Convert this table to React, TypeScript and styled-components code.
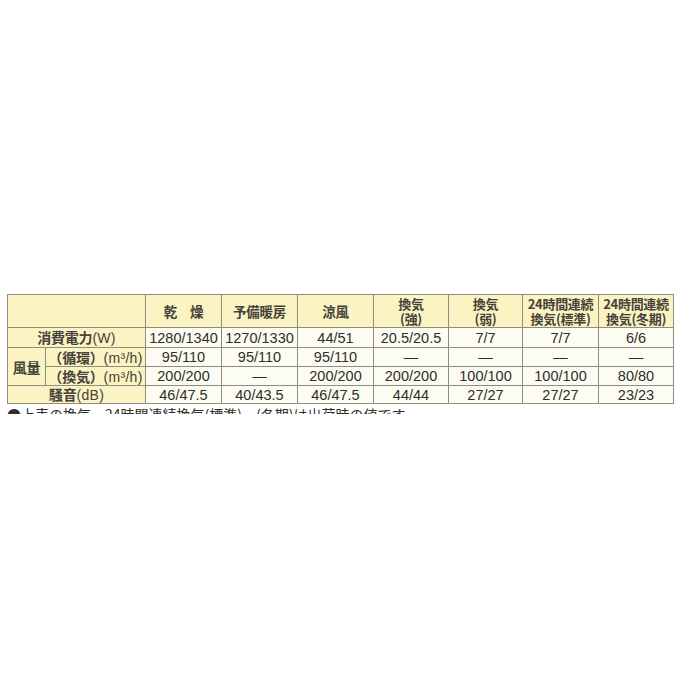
import React from "react";
import styled, { createGlobalStyle } from "styled-components";

const Global = createGlobalStyle`
  html, body { margin: 0; padding: 0; background: #ffffff; }
  body { font-family: "Liberation Sans", "Noto Sans CJK JP", sans-serif; }
`;

const Page = styled.div`
  width: 700px;
  height: 700px;
  padding: 294px 0 0 7px;
  box-sizing: border-box;
  overflow: hidden;
`;

const Table = styled.table`
  border-collapse: collapse;
  table-layout: fixed;
  width: 667px;
  color: #2e2e2a;
  font-size: 14px;
`;

const HeadCell = styled.th<{ $two?: boolean }>`
  background: #fcf3c2;
  border: 1px solid #8f8d80;
  height: 32px;
  padding: 0;
  font-family: "Noto Sans CJK JP", sans-serif;
  font-weight: 700;
  font-size: ${(p) => (p.$two ? "13px" : "13.5px")};
  line-height: ${(p) => (p.$two ? "15px" : "16px")};
  text-align: center;
  vertical-align: middle;
  color: #44423a;
  white-space: nowrap;
  letter-spacing: -0.3px;
`;

const Label = styled.td`
  background: #fcf3c2;
  border: 1px solid #8f8d80;
  padding: 0;
  font-family: "Noto Sans CJK JP", sans-serif;
  font-weight: 700;
  font-size: 14px;
  line-height: 16px;
  text-align: center;
  vertical-align: middle;
  color: #44423a;
  white-space: nowrap;
  letter-spacing: -0.2px;
`;

const Unit = styled.span`
  font-family: "Liberation Sans", sans-serif;
  font-weight: 400;
  letter-spacing: 0.3px;
`;

const Data = styled.td<{ $h: number }>`
  background: #fdfcf2;
  border: 1px solid #8f8d80;
  height: ${(p) => p.$h}px;
  padding: 0;
  text-align: center;
  vertical-align: middle;
  font-family: "Liberation Sans", sans-serif;
  font-size: 14.5px;
  line-height: 16px;
  color: #2e2e2a;
  white-space: nowrap;
`;

const Note = styled.div`
  height: 9px;
  overflow: hidden;
  margin-top: 1px;
  font-family: "Noto Sans CJK JP", sans-serif;
  font-size: 14px;
  line-height: 19px;
  color: #2e2e2a;
  white-space: nowrap;
`;

const cols = [38, 100, 76, 76, 76, 75, 74, 76, 75];

const dash = "—";

export default function App() {
  return (
    <Page>
      <Global />
      <Table>
        <colgroup>
          {cols.map((w, i) => (
            <col key={i} style={{ width: w }} />
          ))}
        </colgroup>
        <thead>
          <tr>
            <HeadCell colSpan={2} />
            <HeadCell>乾&emsp;燥</HeadCell>
            <HeadCell>予備暖房</HeadCell>
            <HeadCell>涼風</HeadCell>
            <HeadCell $two>
              換気
              <br />
              (強)
            </HeadCell>
            <HeadCell $two>
              換気
              <br />
              (弱)
            </HeadCell>
            <HeadCell $two>
              24時間連続
              <br />
              換気(標準)
            </HeadCell>
            <HeadCell $two>
              24時間連続
              <br />
              換気(冬期)
            </HeadCell>
          </tr>
        </thead>
        <tbody>
          <tr>
            <Label colSpan={2}>
              消費電力<Unit>(W)</Unit>
            </Label>
            {["1280/1340", "1270/1330", "44/51", "20.5/20.5", "7/7", "7/7", "6/6"].map((v, i) => (
              <Data key={i} $h={19}>{v}</Data>
            ))}
          </tr>
          <tr>
            <Label rowSpan={2}>風量</Label>
            <Label>
              （循環）<Unit>(m³/h)</Unit>
            </Label>
            {["95/110", "95/110", "95/110", dash, dash, dash, dash].map((v, i) => (
              <Data key={i} $h={18}>{v}</Data>
            ))}
          </tr>
          <tr>
            <Label>
              （換気）<Unit>(m³/h)</Unit>
            </Label>
            {["200/200", dash, "200/200", "200/200", "100/100", "100/100", "80/80"].map((v, i) => (
              <Data key={i} $h={18}>{v}</Data>
            ))}
          </tr>
          <tr>
            <Label colSpan={2}>
              騒音<Unit>(dB)</Unit>
            </Label>
            {["46/47.5", "40/43.5", "46/47.5", "44/44", "27/27", "27/27", "23/23"].map((v, i) => (
              <Data key={i} $h={17}>{v}</Data>
            ))}
          </tr>
        </tbody>
      </Table>
      <Note>●上表の換気、24時間連続換気(標準)・(冬期)は出荷時の値です。</Note>
    </Page>
  );
}
